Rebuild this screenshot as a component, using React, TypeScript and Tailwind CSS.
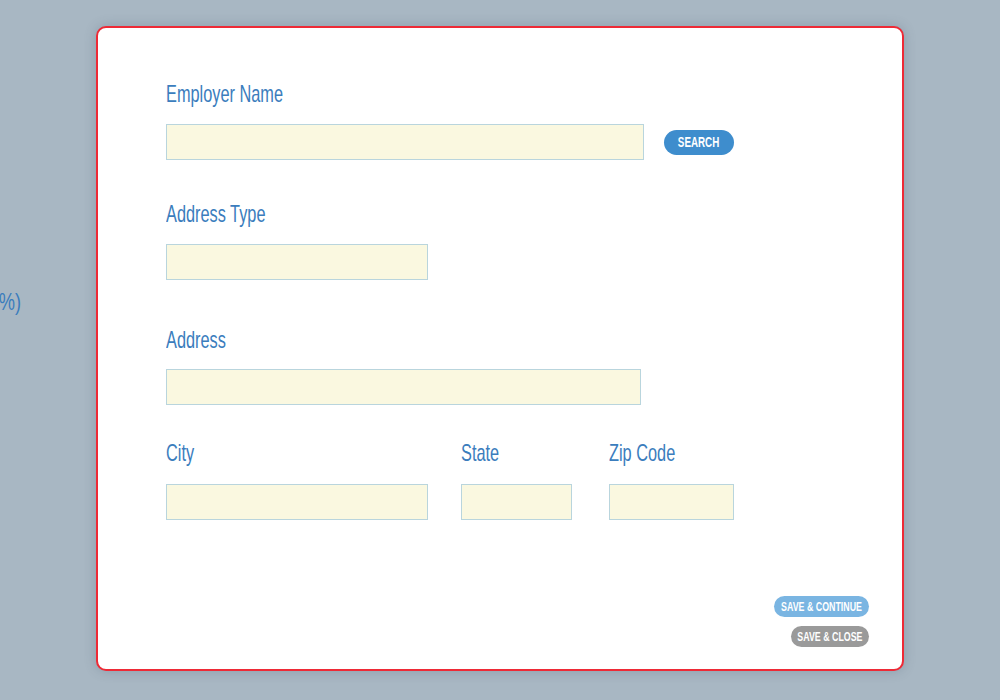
const labelFont = { fontFamily: '"Liberation Sans Narrow", "Liberation Sans", Arial, sans-serif' };

function Label({ children }: { children: string }) {
  return (
    <div className="h-[28px] leading-[28px] text-[24px] text-[#3b7dbd] whitespace-nowrap" style={labelFont}>
      <span className="inline-block origin-left scale-x-[0.68]">{children}</span>
    </div>
  );
}

function Field({ width }: { width: string }) {
  return <input className={`${width} h-[36px] bg-[#faf8e0] border border-[#b9d5dd] outline-none`} />;
}

function Pill({ text, className, size }: { text: string; className: string; size: string }) {
  return (
    <button
      className={`flex items-center justify-center rounded-full text-white font-bold whitespace-nowrap ${className}`}
      style={labelFont}
    >
      <span className={`inline-block origin-center ${size}`}>{text}</span>
    </button>
  );
}

export default function App() {
  return (
    <div className="relative w-[1000px] h-[700px] overflow-hidden bg-[#a8b7c3]">
      {/* page behind the dialog */}
      <div className="pt-[288px] w-[21px] flex justify-end">
        <div className="h-[28px] leading-[28px] text-[24px] text-[#3b7dbd] whitespace-nowrap" style={labelFont}>
          <span className="inline-block origin-right scale-x-[0.76]">(35%)</span>
        </div>
      </div>

      {/* dialog */}
      <div className="absolute inset-0 flex justify-center items-start pt-[26px]">
        <div className="w-[808px] h-[645px] bg-white border-2 border-[#ee2a36] rounded-[10px] shadow-[0_0_12px_rgba(60,80,100,0.25)] pl-[68px] pr-[33px] pt-[52px] flex flex-col">
          <Label>Employer Name</Label>
          <div className="flex items-center gap-[20px] mt-[16px]">
            <Field width="w-[478px]" />
            <Pill text="SEARCH" className="w-[70px] h-[25px] bg-[#3e8dcd] text-[14px]" size="scale-x-[0.7]" />
          </div>

          <div className="mt-[40px]">
            <Label>Address Type</Label>
          </div>
          <div className="mt-[16px]">
            <Field width="w-[262px]" />
          </div>

          <div className="mt-[46px]">
            <Label>Address</Label>
          </div>
          <div className="mt-[15px]">
            <Field width="w-[475px]" />
          </div>

          <div className="mt-[34px] flex">
            <div className="flex flex-col gap-[17px] w-[262px]">
              <Label>City</Label>
              <Field width="w-[262px]" />
            </div>
            <div className="flex flex-col gap-[17px] w-[111px] ml-[33px]">
              <Label>State</Label>
              <Field width="w-[111px]" />
            </div>
            <div className="flex flex-col gap-[17px] w-[125px] ml-[37px]">
              <Label>Zip Code</Label>
              <Field width="w-[125px]" />
            </div>
          </div>

          <div className="mt-[76px] flex flex-col items-end gap-[9px]">
            <Pill text="SAVE & CONTINUE" className="w-[95px] h-[21px] bg-[#7ab5e2] text-[13px]" size="scale-x-[0.68]" />
            <Pill text="SAVE & CLOSE" className="w-[78px] h-[21px] bg-[#9a9a9a] text-[13px]" size="scale-x-[0.68]" />
          </div>
        </div>
      </div>
    </div>
  );
}
